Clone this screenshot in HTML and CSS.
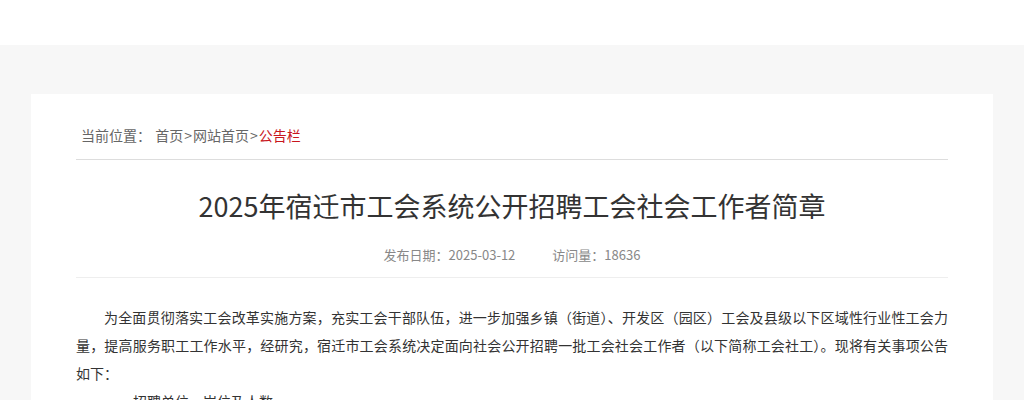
FILE: index.html
```html
<!DOCTYPE html>
<html lang="zh-CN">
<head>
    <meta charset="UTF-8">
    <meta name="viewport" content="width=device-width, initial-scale=1.0">
    <title>2025年宿迁市工会系统公开招聘工会社会工作者简章</title>
    <link rel="stylesheet" href="styles.css">
</head>
<body>
    <div class="cabecera"></div>
    <div class="principal">
        <div class="tarjeta">
            <div class="migas">
                <span class="migas-label">当前位置：</span>
                <a href="#">首页</a><span class="sep">&gt;</span><a href="#">网站首页</a><span class="sep">&gt;</span><a href="#" class="actual">公告栏</a>
            </div>
            <h1 class="titulo">2025年宿迁市工会系统公开招聘工会社会工作者简章</h1>
            <div class="meta">
                <span>发布日期：2025-03-12</span>
                <span>访问量：18636</span>
            </div>
            <div class="contenido">
                <p class="parrafo">为全面贯彻落实工会改革实施方案，充实工会干部队伍，进一步加强乡镇（街道）、开发区（园区）工会及县级以下区域性行业性工会力量，提高服务职工工作水平，经研究，宿迁市工会系统决定面向社会公开招聘一批工会社会工作者（以下简称工会社工）。现将有关事项公告如下：</p>
                <p class="parrafo sub">招聘单位、岗位及人数</p>
            </div>
        </div>
    </div>
</body>
</html>
```

FILE: styles.css
```css
body {
    margin: 0;
    padding: 0;
    background-color: #f7f7f7;
    font-family: "Noto Sans CJK SC", "Noto Sans", sans-serif;
    color: #333;
}

.cabecera {
    height: 45px;
    background-color: #fff;
}

.principal {
    padding: 49px 31px 40px;
}

.tarjeta {
    background-color: #fff;
    padding: 31px 45px 40px;
}

.migas {
    font-size: 14px;
    line-height: 20px;
    color: #666;
    padding: 0 0 14px 5px;
    border-bottom: 1px solid #ddd;
}

.migas-label {
    margin-right: 1px;
}

.migas .sep {
    margin: 0 1px;
}

.migas a {
    color: #666;
    text-decoration: none;
}

.migas a.actual {
    color: #c8161d;
}

.titulo {
    margin: 26px 0 19px;
    font-size: 27px;
    line-height: 40px;
    font-weight: normal;
    text-align: center;
    color: #333;
}

.meta {
    display: flex;
    justify-content: center;
    gap: 37px;
    font-size: 13px;
    line-height: 20px;
    color: #888;
    padding-bottom: 12px;
    border-bottom: 1px solid #eee;
}

.contenido {
    padding-top: 25px;
}

.parrafo {
    margin: 0;
    font-size: 14px;
    line-height: 28px;
    text-indent: 28px;
    text-align: justify;
    color: #333;
}

.parrafo.sub {
    text-indent: 57px;
}
```
